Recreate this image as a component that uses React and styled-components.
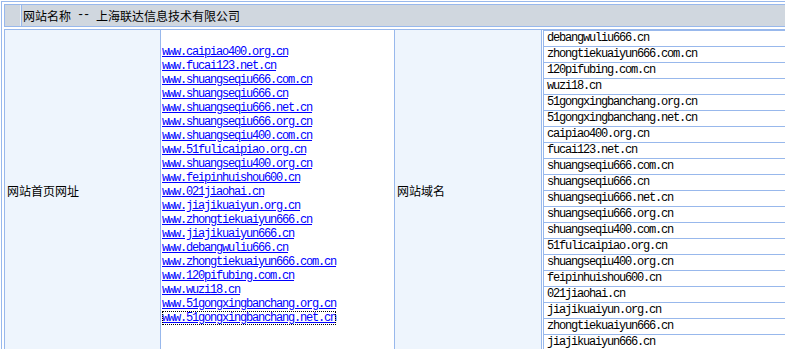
import React from 'react';
import styled, { createGlobalStyle } from 'styled-components';

const homeLinks = [
  'www.caipiao400.org.cn',
  'www.fucai123.net.cn',
  'www.shuangseqiu666.com.cn',
  'www.shuangseqiu666.cn',
  'www.shuangseqiu666.net.cn',
  'www.shuangseqiu666.org.cn',
  'www.shuangseqiu400.com.cn',
  'www.51fulicaipiao.org.cn',
  'www.shuangseqiu400.org.cn',
  'www.feipinhuishou600.cn',
  'www.021jiaohai.cn',
  'www.jiajikuaiyun.org.cn',
  'www.zhongtiekuaiyun666.cn',
  'www.jiajikuaiyun666.cn',
  'www.debangwuliu666.cn',
  'www.zhongtiekuaiyun666.com.cn',
  'www.120pifubing.com.cn',
  'www.wuzi18.cn',
  'www.51gongxingbanchang.org.cn',
  'www.51gongxingbanchang.net.cn',
];

const domains = [
  'debangwuliu666.cn',
  'zhongtiekuaiyun666.com.cn',
  '120pifubing.com.cn',
  'wuzi18.cn',
  '51gongxingbanchang.org.cn',
  '51gongxingbanchang.net.cn',
  'caipiao400.org.cn',
  'fucai123.net.cn',
  'shuangseqiu666.com.cn',
  'shuangseqiu666.cn',
  'shuangseqiu666.net.cn',
  'shuangseqiu666.org.cn',
  'shuangseqiu400.com.cn',
  '51fulicaipiao.org.cn',
  'shuangseqiu400.org.cn',
  'feipinhuishou600.cn',
  '021jiaohai.cn',
  'jiajikuaiyun.org.cn',
  'zhongtiekuaiyun666.cn',
  'jiajikuaiyun666.cn',
];

const BORDER = '#98b8ec';
const mono = '"Liberation Mono", "Noto Sans CJK SC", monospace';

const GlobalStyle = createGlobalStyle`
  html, body {
    margin: 0;
    padding: 0;
    background: #fff;
    overflow: hidden;
  }
  body {
    font-family: "Noto Sans CJK SC", sans-serif;
    font-size: 12px;
    color: #000;
  }
`;

const App = () => (
  <>
    <GlobalStyle />
    <Frame>
      <HeaderRow>
        <HeaderStub />
        <HeaderTitle>
          网站名称<Dash>--</Dash>上海联达信息技术有限公司
        </HeaderTitle>
      </HeaderRow>
      <BodyRow>
        <LabelCell $width={156} $pad={2}>网站首页网址</LabelCell>
        <LinkCell>
          <LinkList>
            {homeLinks.map((url, i) => (
              <SiteLink
                key={url}
                href="#"
                $focused={i === homeLinks.length - 1}
              >
                {url}
              </SiteLink>
            ))}
          </LinkList>
        </LinkCell>
        <LabelCell $width={147} $pad={2}>网站域名</LabelCell>
        <DomainCell>
          <DomainTable>
            {domains.map((d) => (
              <DomainRow key={d}>{d}</DomainRow>
            ))}
          </DomainTable>
        </DomainCell>
      </BodyRow>
    </Frame>
  </>
);

/* 표는 오른쪽으로 화면 밖까지 이어짐 */
const Frame = styled.div`
  margin: 1px 0 0 1px;
  width: 792px;
  box-sizing: border-box;
  border: 1px solid ${BORDER};
  padding: 2px;
  display: flex;
  flex-direction: column;
  gap: 2px;
`;

const HeaderRow = styled.div`
  display: flex;
  height: 21px;
  border: 1px solid ${BORDER};
  background: #d0d7df;
`;

const HeaderStub = styled.div`
  width: 15px;
  border-right: 1px solid #eef2f7;
  box-shadow: 1px 0 0 ${BORDER};
`;

const HeaderTitle = styled.div`
  display: flex;
  align-items: center;
  padding-left: 1px;
  margin-left: 1px;
  white-space: nowrap;
  line-height: 21px;
`;

const Dash = styled.span`
  font-family: ${mono};
  font-size: 12px;
  letter-spacing: -1.2px;
  margin: 0 7px 0 6px;
`;

const BodyRow = styled.div`
  display: flex;
  border: 1px solid ${BORDER};
  height: 320px;
`;

const LabelCell = styled.div`
  flex: 0 0 ${(p) => p.$width}px;
  display: flex;
  align-items: center;
  padding-left: ${(p) => p.$pad}px;
  box-sizing: border-box;
  background: #eef5fd;
  border-right: 1px solid ${BORDER};
`;

const LinkCell = styled.div`
  flex: 0 0 234px;
  display: flex;
  align-items: center;
  padding-left: 1px;
  box-sizing: border-box;
  background: #fff;
  border-right: 1px solid ${BORDER};
`;

const LinkList = styled.div`
  display: flex;
  flex-direction: column;
  align-items: flex-start;
  padding-bottom: 10px;
`;

const SiteLink = styled.a`
  font-family: ${mono};
  font-size: 12px;
  letter-spacing: -1.2px;
  line-height: 14px;
  height: 14px;
  color: #0000ff;
  text-decoration: underline;
  outline: ${(p) => (p.$focused ? '1px dotted #000' : 'none')};
  outline-offset: -1px;
`;

const DomainCell = styled.div`
  flex: 1;
  padding-left: 1px;
  background: #fff;
  overflow: hidden;
`;

const DomainTable = styled.div`
  border-left: 1px solid ${BORDER};
`;

const DomainRow = styled.div`
  height: 15px;
  line-height: 15px;
  border-top: 1px solid ${BORDER};
  padding-left: 3px;
  font-family: ${mono};
  font-size: 12px;
  letter-spacing: -1.2px;
  color: #000;
  white-space: nowrap;
`;

export default App;
